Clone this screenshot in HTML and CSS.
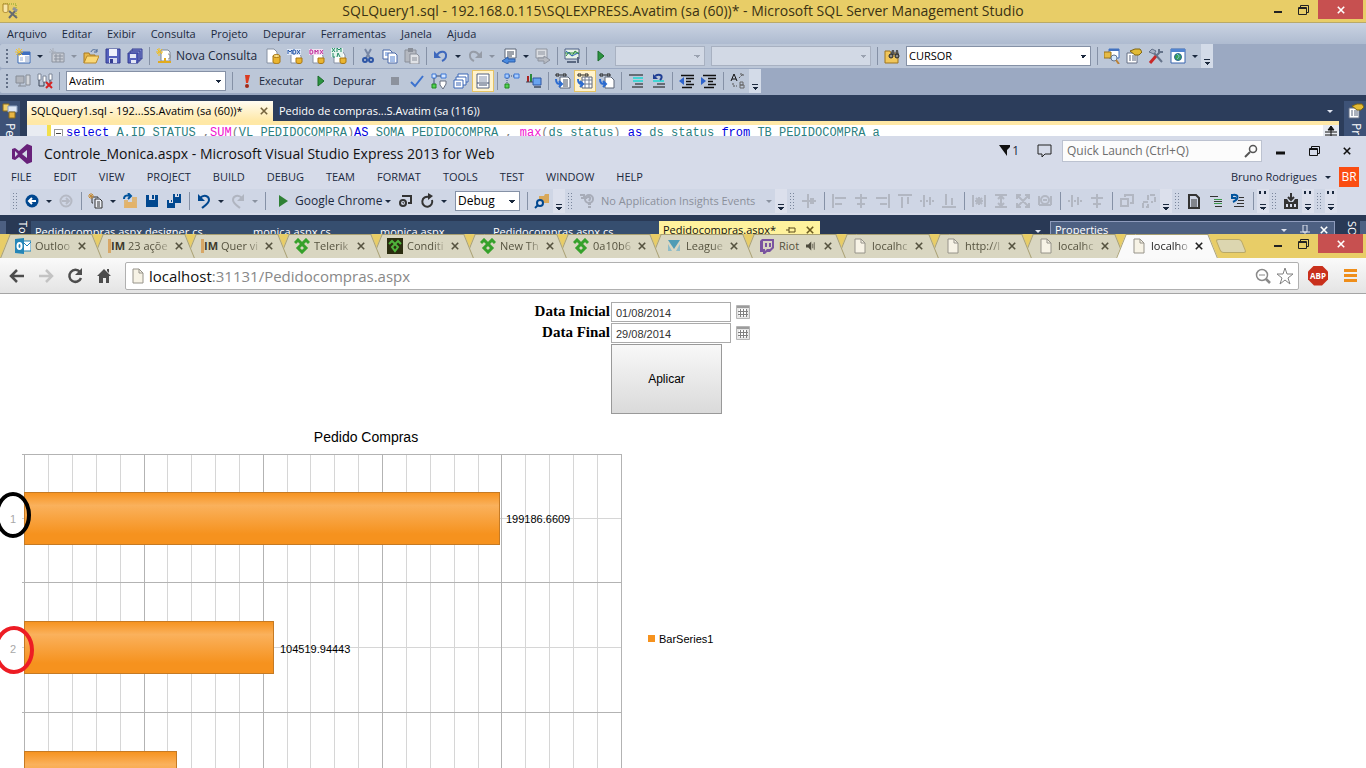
FILE: index.html
```
<!DOCTYPE html>
<html lang="pt-BR">

<head>
  <meta charset="UTF-8">
  <meta name="viewport" content="width=device-width, initial-scale=1.0">
  <title>Pedido Compras</title>
  <link rel="stylesheet" href="styles.css">
</head>

<body>

  <!-- icons -->
  <svg class="sprite" aria-hidden="true">
    <symbol id="new" viewBox="0 0 16 16"><path d="M3 4h12v11H3z" fill="#fff" stroke="#3a6ab4"/><path d="M3 4h12v3H3z" fill="#3f6fc0"/><path d="M5 9h3v4H5z" fill="#c9d5ea"/><path d="M10 9h4M10 11h4M10 13h4" stroke="#8ea3c8"/><path d="M4 0v8M0 4h8M1 1l6 6M7 1L1 7" stroke="#f2c230"/></symbol>
    <symbol id="newgray" viewBox="0 0 16 16"><path d="M3 5h12v9H3z" fill="#c8ccd4" stroke="#8c939f"/><path d="M5 8h9M5 11h9M7 6v8M11 6v8" stroke="#8c939f"/><path d="M4 0v7M0 4h7M1 1l5 5" stroke="#a9afba"/></symbol>
    <symbol id="open" viewBox="0 0 16 16"><path d="M1 15V5h5l1 2h5v2" fill="#e8b84a" stroke="#a87820"/><path d="M1 15l3-7h12l-3 7z" fill="#fad877" stroke="#b98a2a"/><path d="M8 4c1-3 4-3 6-1M14 1v3h-3" fill="none" stroke="#4a6896"/></symbol>
    <symbol id="save" viewBox="0 0 16 16"><path d="M1 1h14v14H1z" fill="#5561bd" stroke="#343c91"/><path d="M4 1h8v7H4z" fill="#eef0fb"/><path d="M4 10h8v5H4z" fill="#d6daf0"/><path d="M5 11h3v4H5z" fill="#343c91"/></symbol>
    <symbol id="saveall" viewBox="0 0 16 16"><path d="M5 1h10v10H5z" fill="#7d87cf" stroke="#343c91"/><path d="M3 3h10v10H3z" fill="#7d87cf" stroke="#343c91"/><path d="M1 5h10v10H1z" fill="#5561bd" stroke="#343c91"/><path d="M3 6h6v4H3zM4 12h5v3H4z" fill="#e3e6f5"/></symbol>
    <symbol id="query" viewBox="0 0 16 16"><path d="M5 2h7l2 2v9H5z" fill="#fff" stroke="#7f8896"/><path d="M12 6c3 0 3 5 0 5" fill="none" stroke="#8e8e8e"/><path d="M2 14h13M9 10v4" stroke="#e0aa20" stroke-width="2"/><path d="M3 0v8M0 4h7M1 1l5 5M6 1L1 6" stroke="#f0bd1c"/></symbol>
    <symbol id="dbdoc" viewBox="0 0 16 16"><path d="M2 1h7l3 3v11H2z" fill="#fff" stroke="#8791a3"/><path d="M8 8v6c0 2 7 2 7 0V8z" fill="#eab530" stroke="#a87612"/><ellipse cx="11.500" cy="8" rx="3.500" ry="1.500" fill="#ffe48b" stroke="#a87612"/></symbol>
    <symbol id="mdx" viewBox="0 0 16 16"><path d="M4 5h8l2 3v7H4z" fill="#fff" stroke="#8791a3"/><path d="M0 1h14v6H0z" fill="#dfe7f5"/><path d="M1 6V2l2 2 2-2v4M6 2h2l1 2-1 2H6zM10 2l3 4M13 2l-3 4" fill="none" stroke="#2456a8"/><path d="M9 10v4c0 2 6 2 6 0v-4z" fill="#eab530" stroke="#a87612"/></symbol>
    <symbol id="dmx" viewBox="0 0 16 16"><path d="M4 5h8l2 3v7H4z" fill="#fff" stroke="#8791a3"/><path d="M0 1h14v6H0z" fill="#f2e0f0"/><path d="M1 2h2l1 2-1 2H1zM6 6V2l1 2 2-2v4M11 2l3 4M14 2l-3 4" fill="none" stroke="#c02a9a"/><path d="M9 10v4c0 2 6 2 6 0v-4z" fill="#eab530" stroke="#a87612"/></symbol>
    <symbol id="xmla" viewBox="0 0 16 16"><path d="M3 4h9l2 3v8H3z" fill="#fff" stroke="#8791a3"/><path d="M0 0h12v9H0z" fill="#e6f4ee"/><path d="M1 0l3 4M4 0L1 4M6 4V0l2 2 2-2v4M2 5v4h2M6 9l1-4 2 4" fill="none" stroke="#1f8b64"/><path d="M9 10v4c0 2 6 2 6 0v-4z" fill="#eab530" stroke="#a87612"/></symbol>
    <symbol id="cut" viewBox="0 0 16 16"><path d="M5 1l5 9M11 1l-5 9" stroke="#7787a5" stroke-width="2"/><circle cx="5" cy="12" r="2" fill="none" stroke="#2d55a5" stroke-width="2"/><circle cx="11" cy="12" r="2" fill="none" stroke="#2d55a5" stroke-width="2"/></symbol>
    <symbol id="copy" viewBox="0 0 16 16"><path d="M1 2h7l2 2v7H1z" fill="#fff" stroke="#4a68a8"/><path d="M6 5h7l2 2v8H6z" fill="#fff" stroke="#4a68a8"/><path d="M8 9h5M8 11h5M8 13h5M3 5h3M3 7h3" stroke="#4f7fd0"/></symbol>
    <symbol id="paste" viewBox="0 0 16 16"><path d="M1 2h11v12H1z" fill="#b4b8c0" stroke="#8a8f99"/><path d="M4 0h5v4H4z" fill="#8a8f99"/><path d="M6 6h7l2 2v8H6z" fill="#e0e2e6" stroke="#8a8f99"/><path d="M8 10h5M8 12h5" stroke="#8a8f99"/></symbol>
    <symbol id="undo" viewBox="0 0 16 16"><path d="M4 7c3-5 10-4 9 1 0 2-2 4-4 5" fill="none" stroke="#3e68bd" stroke-width="2"/><path d="M1 3v7h7z" fill="#3e68bd"/></symbol>
    <symbol id="redo" viewBox="0 0 16 16"><path d="M12 7C9 2 2 3 3 8c0 2 2 4 4 5" fill="none" stroke="#969ca7" stroke-width="2"/><path d="M15 3v7H8z" fill="#969ca7"/></symbol>
    <symbol id="navback" viewBox="0 0 16 16"><path d="M4 1h11v9H4z" fill="#fff" stroke="#5c6678"/><path d="M6 4h7M6 6h7M6 8h5" stroke="#3d4656"/><path d="M7 9v2h7v3H7v2l-6-3z" fill="#4b8be0" stroke="#2a5ca8"/></symbol>
    <symbol id="navfwd" viewBox="0 0 16 16"><path d="M1 1h11v9H1z" fill="#dadde2" stroke="#8d939e"/><path d="M3 4h7M3 6h7" stroke="#8d939e"/><path d="M9 8v2H3v3h6v3l6-4z" fill="#b6bac2" stroke="#8d939e"/></symbol>
    <symbol id="monitor" viewBox="0 0 16 16"><path d="M1 1h14v10H1z" fill="#e8f3e8" stroke="#4d5f86"/><path d="M2 8l3-4 3 4 3-5 4 3M1 5h14" fill="none" stroke="#2c8c3c"/><path d="M2 3l6 5 6-3" fill="none" stroke="#3065c0"/><path d="M3 14h9M14 9v6" stroke="#5a6880" stroke-width="2"/></symbol>
    <symbol id="play" viewBox="0 0 16 16"><path d="M5 3l6 5-6 5z" fill="#2b9440" stroke="#1a6b2a"/></symbol>
    <symbol id="findfile" viewBox="0 0 16 16"><path d="M1 15V3h5l1 2h7v10z" fill="#f1c75b" stroke="#9d741e"/><path d="M8 2h2l1 5H6zM12 2h2l1 6h-4z" fill="#555"/><circle cx="7" cy="8" r="2" fill="#8b8b8b" stroke="#222"/><circle cx="13" cy="8" r="2" fill="#8b8b8b" stroke="#222"/></symbol>
    <symbol id="explorer" viewBox="0 0 16 16"><path d="M5 1h10v9H5z" fill="#fff" stroke="#4272c0"/><path d="M5 1h10v2H5z" fill="#4272c0"/><path d="M0 4h7v6H0z" fill="#e6bb45" stroke="#9a7218"/><circle cx="10" cy="10" r="3" fill="#d7ebff" stroke="#64748c"/><path d="M12 12l3 4" stroke="#bb8237" stroke-width="2"/></symbol>
    <symbol id="props" viewBox="0 0 16 16"><path d="M1 5h10v10H1z" fill="#fff" stroke="#667086"/><path d="M3 8h2M3 10h2M3 12h2M6 8h4M6 10h4M6 12h4" stroke="#56627a"/><path d="M4 3l5-2h5l2 3-3 3H9z" fill="#e3bb35" stroke="#816612"/></symbol>
    <symbol id="tools" viewBox="0 0 16 16"><path d="M14 14L6 5" stroke="#65738a" stroke-width="2"/><path d="M1 4l3-3 4 2-2 3z" fill="#a7b2c4" stroke="#65738a"/><path d="M2 15l6-7" stroke="#c92828" stroke-width="3"/><path d="M8 8l4-4M11 1v3h4" fill="none" stroke="#65738a" stroke-width="2"/></symbol>
    <symbol id="web" viewBox="0 0 16 16"><path d="M1 1h14v14H1z" fill="#fff" stroke="#3864ae"/><path d="M1 1h14v3H1z" fill="#5285d0"/><circle cx="8" cy="9" r="3.500" fill="#3aa055" stroke="#28659c"/><path d="M7 6c3 2 2 3 0 5" fill="none" stroke="#7fc9ee"/></symbol>

    <symbol id="conn" viewBox="0 0 16 16"><path d="M1 3h8v7H1z" fill="#b1b5bd" stroke="#868c96"/><path d="M3 13h8M11 2h4v10h-4zM5 10v3" fill="#d3d6db" stroke="#868c96"/></symbol>
    <symbol id="disc" viewBox="0 0 16 16"><path d="M1 1h3v6H1zM6 3h3v6H6zM12 1h3v6h-3z" fill="#fff" stroke="#7c8698"/><path d="M2 7v6h5V9M13 7v3" fill="none" stroke="#3c4658"/><path d="M9 9l6 6M15 9l-6 6" stroke="#d62222" stroke-width="2"/></symbol>
    <symbol id="bang" viewBox="0 0 16 16"><path d="M6 2h5l-2 8H7z" fill="#dc3a1f"/><circle cx="8" cy="13" r="2" fill="#a32a17"/></symbol>
    <symbol id="stop" viewBox="0 0 16 16"><path d="M4 4h8v8H4z" fill="#8c929d"/></symbol>
    <symbol id="check" viewBox="0 0 16 16"><path d="M2 9l4 4 8-10" fill="none" stroke="#3c72cf" stroke-width="2"/></symbol>
    <symbol id="plan" viewBox="0 0 16 16"><path d="M1 1h4v4H1zM10 1h5v4h-5z" fill="#d7e7ff" stroke="#3a77d6"/><path d="M1 11h4v4H1z" fill="#53d153" stroke="#218a21"/><path d="M5 3h5M3 5v6" stroke="#3a4f75"/><path d="M9 8h6v3l-3 5-3-4z" fill="#fff" stroke="#666f80"/></symbol>
    <symbol id="plan2" viewBox="0 0 16 16"><path d="M1 1h4v4H1zM10 1h5v4h-5z" fill="#a9cdff" stroke="#3a77d6"/><path d="M1 11h4v4H1z" fill="#53d153" stroke="#218a21"/><path d="M5 3h5M3 5v6" stroke="#3a4f75" stroke-dasharray="1 1"/></symbol>
    <symbol id="windows" viewBox="0 0 16 16"><path d="M5 1h10v8H5z" fill="#fff" stroke="#3a67b6"/><path d="M3 4h10v8H3z" fill="#fff" stroke="#3a67b6"/><path d="M1 7h9v8H1z" fill="#fff" stroke="#3a67b6"/><path d="M3 10h5M3 12h5" stroke="#3a67b6"/></symbol>
    <symbol id="page" viewBox="0 0 16 16"><path d="M2 1h12v14H2z" fill="#fff" stroke="#52617e"/><path d="M4 4h8M4 6h8M4 8h8" stroke="#8391ab"/><path d="M2 10h12M4 12h8" stroke="#3d4d6a"/></symbol>
    <symbol id="stats" viewBox="0 0 16 16"><path d="M1 3h2v6H1z" fill="#a22"/><path d="M4 1h2v8H4z" fill="#2b8a3a"/><path d="M0 9h8" stroke="#445"/><path d="M7 5h8v7H7z" fill="#69a4f0" stroke="#2f57a2"/><path d="M8 14h7" stroke="#5d6a80" stroke-width="2"/></symbol>
    <symbol id="restext" viewBox="0 0 16 16"><path d="M1 1h3v2H1zM6 1v2M8 1h3v2H8z" fill="none" stroke="#222"/><path d="M5 4h8l2 2v9H5z" fill="#fff" stroke="#5b6577"/><path d="M8 7h5M8 9h5M8 11h5M8 13h5" stroke="#454f60"/><path d="M1 6c0 5 2 5 5 5M4 8l3 3-3 3" fill="none" stroke="#2b6bd0" stroke-width="2"/></symbol>
    <symbol id="resgrid" viewBox="0 0 16 16"><path d="M1 1h3v2H1zM6 1v2M8 1h3v2H8z" fill="none" stroke="#222"/><path d="M5 4h10v11H5z" fill="#fff" stroke="#5b6577"/><path d="M5 7h10M5 11h10M8 4v11M12 4v11" stroke="#6d7a92"/><path d="M1 6c0 5 2 5 4 5M3 8l3 3-3 3" fill="none" stroke="#2b6bd0" stroke-width="2"/></symbol>
    <symbol id="resfile" viewBox="0 0 16 16"><path d="M1 1h3v2H1zM6 1v2M8 1h3v2H8z" fill="none" stroke="#222"/><path d="M6 4h6l3 3v8H6z" fill="#fff" stroke="#5b6577"/><path d="M1 6c0 5 2 5 5 5M4 8l3 3-3 3" fill="none" stroke="#2b6bd0" stroke-width="2"/></symbol>
    <symbol id="comment" viewBox="0 0 16 16"><path d="M1 2h14M4 14h11M7 11h8" stroke="#111"/><path d="M5 5h10M5 8h10" stroke="#43d3d3" stroke-width="2"/></symbol>
    <symbol id="uncomment" viewBox="0 0 16 16"><path d="M3 14h12M7 11h8" stroke="#111" stroke-width="1"/><path d="M3 8h11" stroke="#43d3d3" stroke-width="2"/><path d="M5 3c5-3 9 0 5 4" fill="none" stroke="#203f94" stroke-width="2"/><path d="M3 1v5h5z" fill="#203f94"/></symbol>
    <symbol id="outdent" viewBox="0 0 16 16"><path d="M2 2.500h13M7 5.500h8M7 8.500h5M7 11.500h8M3 14.500h10" stroke="#111" stroke-width="1.500"/><path d="M5 4v8L0 8z" fill="#2e63cc"/></symbol>
    <symbol id="indent" viewBox="0 0 16 16"><path d="M2 2.500h13M7 5.500h8M7 8.500h5M7 11.500h8M3 14.500h10" stroke="#111" stroke-width="1.500"/><path d="M0 4v8l5-4z" fill="#2e63cc"/></symbol>
    <symbol id="ab" viewBox="0 0 16 16"><path d="M1 8l3-7 3 7M2 6h4" fill="none" stroke="#111"/><path d="M10 9h3v3h-3zM10 12h4v3h-4z" fill="none" stroke="#666"/><path d="M9 5l4-4M10 1h3v3M3 10v3h4" fill="none" stroke="#555" stroke-dasharray="2 1"/></symbol>
    <symbol id="servers" viewBox="0 0 16 16"><path d="M1 1h6v7H1z" fill="#f0cf6a" stroke="#8a6a1c"/><path d="M6 3h9v6H6z" fill="#dce6f5" stroke="#8aa0c2"/><path d="M7 9h6v6H7z" fill="#e8b644" stroke="#8a6a1c"/></symbol>
    <symbol id="ssms" viewBox="0 0 16 16"><path d="M1 1h13v13" fill="none" stroke="#83a526" stroke-dasharray="1 1"/><path d="M1 1v7c0 2 5 2 5 0V1z" fill="#f8e6a8" stroke="#a98428"/><path d="M7 8l8 7M14 7l-7 8" stroke="#676b70" stroke-width="2"/><path d="M11 5l4 3" stroke="#8f9398" stroke-width="3"/></symbol>

    <symbol id="vs" viewBox="0 0 20 20"><path d="M15 0l5 2v16l-5 2-8-7-4 3-3-1V5l3-1 4 3zM15 6l-5 4 5 4zM3 7v6l3-3z" fill="#68217a" fill-rule="evenodd"/></symbol>
    <symbol id="vback" viewBox="0 0 16 16"><circle cx="8" cy="8" r="6.500" fill="#00478f"/><path d="M12 8H5M8 5L5 8l3 3" fill="none" stroke="#fff" stroke-width="2"/></symbol>
    <symbol id="vfwd" viewBox="0 0 16 16"><circle cx="8" cy="8" r="5.500" fill="none" stroke="#b5b9c4" stroke-width="2"/><path d="M4 8h7M8 5l3 3-3 3" fill="none" stroke="#b5b9c4" stroke-width="2"/></symbol>
    <symbol id="vnew" viewBox="0 0 16 16"><path d="M5 10H4V4h6v1" fill="none" stroke="#333"/><path d="M7 6h5l2 2v7H7z" fill="#eceff6" stroke="#333"/><path d="M9 9h3M9 11h3M9 13h3" stroke="#333"/><path d="M3 0v6M0 3h6M1 1l4 4M5 1L1 5" stroke="#c48a35"/></symbol>
    <symbol id="vopen" viewBox="0 0 16 16"><path d="M2 7h4v8H2zM10 4h5v11h-5z" fill="#dcb67a"/><path d="M2 15l2-6h9l2 6z" fill="#e3b36a"/><path d="M2 6c0-4 4-4 6-3M6 0l3 3-3 3" fill="none" stroke="#00539c" stroke-width="2"/></symbol>
    <symbol id="vsave" viewBox="0 0 16 16"><path d="M2 2h12v12H2z" fill="#00478f"/><path d="M5 2h6v5H5z" fill="#d6dbe9"/><path d="M8 2h2v4H8z" fill="#00478f"/></symbol>
    <symbol id="vsaveall" viewBox="0 0 16 16"><path d="M7 1h8v9H7zM1 7h8v8H1z" fill="#00478f"/><path d="M9 1h4v3H9zM3 7h4v3H3z" fill="#d6dbe9"/><path d="M5 7h1v2H5zM11 1h1v2h-1z" fill="#00478f"/></symbol>
    <symbol id="vundo" viewBox="0 0 16 16"><path d="M4 5c4-4 9-2 9 2 0 3-3 5-7 8" fill="none" stroke="#00478f" stroke-width="2"/><path d="M2 1v7h7z" fill="#00478f"/></symbol>
    <symbol id="vredo" viewBox="0 0 16 16"><path d="M12 5C8 1 3 3 3 7c0 3 3 5 7 8" fill="none" stroke="#b0b5c0" stroke-width="2"/><path d="M14 1v7H7z" fill="#b0b5c0"/></symbol>
    <symbol id="vplay" viewBox="0 0 16 16"><path d="M4 2l9 6-9 6z" fill="#2f8135"/></symbol>
    <symbol id="vlink" viewBox="0 0 16 16"><path d="M5 3h9v7h-3" fill="none" stroke="#333" stroke-width="2"/><circle cx="6" cy="10" r="3" fill="none" stroke="#333" stroke-width="2"/><path d="M6 9v1h1" stroke="#333" fill="none"/></symbol>
    <symbol id="vrefresh" viewBox="0 0 16 16"><path d="M10 4a5 5 0 1 0 3 3" fill="none" stroke="#333" stroke-width="2"/><path d="M9 0v7l5-4z" fill="#333"/></symbol>
    <symbol id="vfind" viewBox="0 0 16 16"><path d="M5 3h5l1-2h4v9H5z" fill="#d8a85a"/><circle cx="6" cy="10" r="3" fill="#d6dbe9" stroke="#00478f" stroke-width="2"/><path d="M4 12l-3 3" stroke="#00478f" stroke-width="2"/></symbol>
    <symbol id="vinsight" viewBox="0 0 16 16"><path d="M1 2h4v3h3M2 5h3" fill="none" stroke="#a7acb8" stroke-width="2"/><circle cx="10" cy="6" r="4" fill="none" stroke="#a7acb8" stroke-width="2"/><path d="M8 5c1-2 4-1 3 1l-1 2M9 11h3M9 14h3" fill="none" stroke="#a7acb8" stroke-width="2"/></symbol>
    <symbol id="a0" viewBox="0 0 16 16"><path d="M1 8h14M7 1v14" fill="none" stroke="#b2b7c2" stroke-width="2"/><path d="M9 5h4v6H9z" fill="#b2b7c2"/></symbol>
    <symbol id="a1" viewBox="0 0 16 16"><path d="M2 1v14M4 5h11M4 11h7" stroke="#b2b7c2" stroke-width="2"/></symbol>
    <symbol id="a2" viewBox="0 0 16 16"><path d="M8 1v3M8 6v4M8 12v3M2 5h12M4 11h8" stroke="#b2b7c2" stroke-width="2"/></symbol>
    <symbol id="a3" viewBox="0 0 16 16"><path d="M14 1v14M1 5h11M5 11h7" stroke="#b2b7c2" stroke-width="2"/></symbol>
    <symbol id="a4" viewBox="0 0 16 16"><path d="M1 2h14M5 4v11M11 4v7" stroke="#b2b7c2" stroke-width="2"/></symbol>
    <symbol id="a5" viewBox="0 0 16 16"><path d="M1 8h2M7 8h2M13 8h2M5 2v12M11 4v8" stroke="#b2b7c2" stroke-width="2"/></symbol>
    <symbol id="a6" viewBox="0 0 16 16"><path d="M1 14h14M5 1v11M11 5v7" stroke="#b2b7c2" stroke-width="2"/></symbol>
    <symbol id="a7" viewBox="0 0 16 16"><path d="M2 2v12M14 2v12M4 8h8M8 4v8M5 5l6 6M11 5l-6 6" stroke="#b2b7c2" stroke-width="2"/></symbol>
    <symbol id="a8" viewBox="0 0 16 16"><path d="M2 2h12M2 14h12M8 3v10M5 6l3-3 3 3M5 10l3 3 3-3" fill="none" stroke="#b2b7c2" stroke-width="2"/></symbol>
    <symbol id="a9" viewBox="0 0 16 16"><path d="M2 6V2h4M10 2h4v4M14 10v4h-4M6 14H2v-4M2 2l12 12M14 2L2 14" fill="none" stroke="#b2b7c2" stroke-width="2"/></symbol>
    <symbol id="a10" viewBox="0 0 16 16"><path d="M2 3v9M14 3v9M2 12h12" fill="none" stroke="#b2b7c2" stroke-width="2"/><circle cx="8" cy="7" r="4" fill="none" stroke="#b2b7c2" stroke-width="2"/><path d="M6 7h4" stroke="#b2b7c2" stroke-width="2"/></symbol>
    <symbol id="a11" viewBox="0 0 16 16"><path d="M6 4V2h8v8h-3M2 6h7v7H2z" fill="none" stroke="#b2b7c2" stroke-width="2"/></symbol>
    <symbol id="a12" viewBox="0 0 16 16"><path d="M7 7V2h7v7h-4M2 9h5v5H2z" fill="none" stroke="#b2b7c2" stroke-width="2" stroke-dasharray="5 2"/></symbol>
    <symbol id="vdoc" viewBox="0 0 16 16"><path d="M3 2h7l3 3v10H3z" fill="none" stroke="#333" stroke-width="2"/><path d="M5 7h6M5 9h6M5 11h6M5 13h6" stroke="#333"/></symbol>
    <symbol id="vlines" viewBox="0 0 16 16"><path d="M2 3.500h8M7 13.500h7" stroke="#333"/><path d="M6 6.500h8M6 10.500h8" stroke="#3c9a4c"/><path d="M6 8.500h8" stroke="#333"/></symbol>
    <symbol id="vlines2" viewBox="0 0 16 16"><path d="M9 4.500h5M8 7.500h6M7 10.500h7M4 13.500h10" stroke="#333"/><path d="M3 2c6-1 6 4 0 7M2 1v4h4" fill="none" stroke="#00539c" stroke-width="2"/></symbol>
    <symbol id="vpublish" viewBox="0 0 16 16"><path d="M8 0v6M5 4l3 3 3-3" fill="none" stroke="#333" stroke-width="2"/><path d="M1 6h3l2 3h4l2-3h3v10H1z" fill="#333"/><path d="M3 11h2v3H3zM7 11h2v3H7zM11 11h2v3h-2z" fill="#d6dbe9"/></symbol>

    <symbol id="outlook" viewBox="0 0 16 16"><path d="M8 3h8v10H8z" fill="#fff" stroke="#1e83b7"/><path d="M9 5l3 3 4-4" fill="none" stroke="#1e83b7"/><path d="M0 1l9-1v16l-9-1z" fill="#2586b8"/><ellipse cx="4.500" cy="8" rx="2" ry="3" fill="none" stroke="#fff" stroke-width="2"/></symbol>
    <symbol id="telerik" viewBox="0 0 16 16"><path d="M1 5l3-3 8 8-4 4-4-4 8-8 3 3" fill="none" stroke="#36a12b" stroke-width="3"/></symbol>
    <symbol id="telerikdark" viewBox="0 0 16 16"><path d="M0 0h16v16H0z" fill="#2b2d10"/><path d="M2 6l3-3 6 6-3 4-3-4 6-6 3 3" fill="none" stroke="#4fb33c" stroke-width="2"/></symbol>
    <symbol id="league" viewBox="0 0 16 16"><path d="M2 2h12l-6 9z" fill="#4f9cb5"/><path d="M2 6v7h4zM14 6v7h-4z" fill="#8fbcc8"/></symbol>
    <symbol id="twitch" viewBox="0 0 16 16"><path d="M1 3l2-2h12v9l-4 4H8l-2 2H4v-2H1z" fill="#7a54a0"/><path d="M4 3h9v6l-2 2H8l-2 2v-2H4z" fill="#d8d5c2"/><path d="M7 5v4M11 5v4" stroke="#7a54a0" stroke-width="2"/></symbol>
    <symbol id="sound" viewBox="0 0 16 16"><path d="M2 6h3l4-4v12l-4-4H2z" fill="#4d4a3c"/><path d="M11 5v6M13 3v10" stroke="#4d4a3c"/></symbol>
    <symbol id="file" viewBox="0 0 16 16"><path d="M3 1h6l4 4v10H3z" fill="#f7f3e6" stroke="#96938a"/><path d="M9 1v4h4" fill="none" stroke="#96938a"/></symbol>
    <symbol id="x" viewBox="0 0 10 10"><path d="M1 1l8 8M9 1L1 9" stroke="currentColor" stroke-width="2"/></symbol>
    <symbol id="min" viewBox="0 0 16 16"><path d="M5 10h8" stroke="currentColor" stroke-width="2"/></symbol>
    <symbol id="max" viewBox="0 0 16 16"><path d="M3.500 5.500h8v7h-8zM5.500 5V3.500h8v7H12M3 6.500h9" fill="none" stroke="currentColor"/></symbol>
    <symbol id="cback" viewBox="0 0 16 16"><path d="M15 8H2M8 2L2 8l6 6" fill="none" stroke="currentColor" stroke-width="2.500"/></symbol>
    <symbol id="cfwd" viewBox="0 0 16 16"><path d="M1 8h13M8 2l6 6-6 6" fill="none" stroke="currentColor" stroke-width="2.500"/></symbol>
    <symbol id="creload" viewBox="0 0 16 16"><path d="M13 4a6 6 0 1 0 1 6" fill="none" stroke="currentColor" stroke-width="2.500"/><path d="M15 0v7H8z" fill="currentColor"/></symbol>
    <symbol id="chome" viewBox="0 0 16 16"><path d="M8 1l7 7h-2v7h-3v-5H7v5H3V8H1zM11 1h2v4l-2-2z" fill="currentColor"/></symbol>
    <symbol id="cal" viewBox="0 0 14 14"><path d="M.5.500h13v13H.5z" fill="#e6e6e6" stroke="#b5b5b5"/><path d="M1 1h12v2H1z" fill="#9c9c9c"/><path d="M3 4h8v7H3z" fill="#fff"/><path d="M2 6.500h10M2 9.500h10M4.500 4v8M7.500 4v8M10.500 4v8" stroke="#808080"/></symbol>
  </svg>

  <!-- SQL Server Management Studio -->
  <section class="window ssms">
    <header class="titlebar">
      <svg class="ico"><use href="#ssms"/></svg>
      <h1>SQLQuery1.sql - 192.168.0.115\SQLEXPRESS.Avatim (sa (60))* - Microsoft SQL Server Management Studio</h1>
      <div class="winbuttons">
        <button aria-label="Minimizar"><svg class="ico"><use href="#min"/></svg></button>
        <button aria-label="Restaurar"><svg class="ico"><use href="#max"/></svg></button>
        <button class="close" aria-label="Fechar"><svg class="x"><use href="#x"/></svg></button>
      </div>
    </header>

    <nav class="menu">
      <a href="#">Arquivo</a>
      <a href="#">Editar</a>
      <a href="#">Exibir</a>
      <a href="#">Consulta</a>
      <a href="#">Projeto</a>
      <a href="#">Depurar</a>
      <a href="#">Ferramentas</a>
      <a href="#">Janela</a>
      <a href="#">Ajuda</a>
    </nav>

    <div class="bars">
      <div class="bar">
        <i class="grip"></i>
        <button class="b" aria-label="Novo projeto"><svg class="ico"><use href="#new"/></svg></button><i class="arrow"></i>
        <button class="b" aria-label="Adicionar item"><svg class="ico"><use href="#newgray"/></svg></button><i class="arrow off"></i>
        <button class="b" aria-label="Abrir"><svg class="ico"><use href="#open"/></svg></button>
        <button class="b" aria-label="Salvar"><svg class="ico"><use href="#save"/></svg></button>
        <button class="b" aria-label="Salvar tudo"><svg class="ico"><use href="#saveall"/></svg></button>
        <i class="sep"></i>
        <button class="b text nova"><svg class="ico"><use href="#query"/></svg>Nova Consulta</button>
        <button class="b" aria-label="Consulta do mecanismo"><svg class="ico"><use href="#dbdoc"/></svg></button>
        <button class="b" aria-label="Consulta MDX"><svg class="ico"><use href="#mdx"/></svg></button>
        <button class="b" aria-label="Consulta DMX"><svg class="ico"><use href="#dmx"/></svg></button>
        <button class="b" aria-label="Consulta XMLA"><svg class="ico"><use href="#xmla"/></svg></button>
        <i class="sep"></i>
        <button class="b" aria-label="Recortar"><svg class="ico"><use href="#cut"/></svg></button>
        <button class="b" aria-label="Copiar"><svg class="ico"><use href="#copy"/></svg></button>
        <button class="b" aria-label="Colar"><svg class="ico"><use href="#paste"/></svg></button>
        <i class="sep"></i>
        <button class="b" aria-label="Desfazer"><svg class="ico"><use href="#undo"/></svg></button><i class="arrow"></i>
        <button class="b" aria-label="Refazer"><svg class="ico"><use href="#redo"/></svg></button><i class="arrow off"></i>
        <button class="b" aria-label="Navegar para trás"><svg class="ico"><use href="#navback"/></svg></button><i class="arrow"></i>
        <button class="b" aria-label="Navegar para frente"><svg class="ico"><use href="#navfwd"/></svg></button>
        <i class="sep"></i>
        <button class="b" aria-label="Monitor de atividade"><svg class="ico"><use href="#monitor"/></svg></button>
        <i class="sep"></i>
        <button class="b" aria-label="Iniciar"><svg class="ico"><use href="#play"/></svg></button>
        <select class="combo small" aria-label="Configuração" disabled><option></option></select>
        <select class="combo" aria-label="Plataforma" disabled><option></option></select>
        <i class="sep"></i>
        <button class="b" aria-label="Localizar em arquivos"><svg class="ico"><use href="#findfile"/></svg></button>
        <select class="combo wide" aria-label="Localizar"><option>CURSOR</option></select>
        <i class="sep"></i>
        <button class="b" aria-label="Explorador"><svg class="ico"><use href="#explorer"/></svg></button>
        <button class="b" aria-label="Propriedades"><svg class="ico"><use href="#props"/></svg></button>
        <button class="b" aria-label="Ferramentas"><svg class="ico"><use href="#tools"/></svg></button>
        <button class="b" aria-label="Navegador"><svg class="ico"><use href="#web"/></svg></button><i class="arrow"></i>
        <i class="more"></i>
      </div>
      <div class="bar">
        <i class="grip"></i>
        <button class="b" aria-label="Conectar"><svg class="ico"><use href="#conn"/></svg></button>
        <button class="b" aria-label="Desconectar"><svg class="ico"><use href="#disc"/></svg></button>
        <i class="sep"></i>
        <select class="combo" aria-label="Banco de dados"><option>Avatim</option></select>
        <i class="sep"></i>
        <button class="b text run"><svg class="ico"><use href="#bang"/></svg>Executar</button>
        <button class="b text run"><svg class="ico"><use href="#play"/></svg>Depurar</button>
        <button class="b" aria-label="Parar"><svg class="ico"><use href="#stop"/></svg></button>
        <button class="b" aria-label="Analisar"><svg class="ico"><use href="#check"/></svg></button>
        <button class="b" aria-label="Plano estimado"><svg class="ico"><use href="#plan"/></svg></button>
        <button class="b" aria-label="Opções de consulta"><svg class="ico"><use href="#windows"/></svg></button>
        <button class="b on" aria-label="IntelliSense"><svg class="ico"><use href="#page"/></svg></button>
        <i class="sep"></i>
        <button class="b" aria-label="Plano real"><svg class="ico"><use href="#plan2"/></svg></button>
        <button class="b" aria-label="Estatísticas"><svg class="ico"><use href="#stats"/></svg></button>
        <i class="sep"></i>
        <button class="b" aria-label="Resultados em texto"><svg class="ico"><use href="#restext"/></svg></button>
        <button class="b on" aria-label="Resultados em grade"><svg class="ico"><use href="#resgrid"/></svg></button>
        <button class="b" aria-label="Resultados em arquivo"><svg class="ico"><use href="#resfile"/></svg></button>
        <i class="sep"></i>
        <button class="b" aria-label="Comentar"><svg class="ico"><use href="#comment"/></svg></button>
        <button class="b" aria-label="Remover comentário"><svg class="ico"><use href="#uncomment"/></svg></button>
        <i class="sep"></i>
        <button class="b" aria-label="Diminuir recuo"><svg class="ico"><use href="#outdent"/></svg></button>
        <button class="b" aria-label="Aumentar recuo"><svg class="ico"><use href="#indent"/></svg></button>
        <i class="sep"></i>
        <button class="b" aria-label="Parâmetros"><svg class="ico"><use href="#ab"/></svg></button>
        <i class="more"></i>
      </div>
    </div>

    <div class="work">
      <aside class="side"><svg class="ico"><use href="#servers"/></svg><span>Pe</span></aside>
      <div class="docs">
        <div class="doctabs">
          <a class="doctab active" href="#">SQLQuery1.sql - 192...SS.Avatim (sa (60))* <svg class="x"><use href="#x"/></svg></a>
          <a class="doctab" href="#">Pedido de compras...S.Avatim (sa (116))</a>
          <i class="arrow light"></i>
        </div>
        <div class="editor">
          <i class="changed"></i><i class="fold"></i>
          <code><b>select</b> A.ID_STATUS <s>,</s><u>SUM</u><s>(</s>VL_PEDIDOCOMPRA<s>)</s><b>AS</b> SOMA_PEDIDOCOMPRA <s>,</s> <u>max</u><s>(</s>ds_status<s>)</s> <b>as</b> ds_status <b>from</b> TB_PEDIDOCOMPRA a</code>
          <svg class="split" viewBox="0 0 16 16"><path d="M0 0h16v16H0z" fill="#e8ebf1"/><path d="M8 1L5 5h6zM2 7h12M2 10h12M8 4v12" fill="#111" stroke="#111"/></svg>
        </div>
      </div>
      <aside class="side right"><svg class="ico"><use href="#props"/></svg><span>Pr</span></aside>
    </div>
  </section>

  <!-- Visual Studio -->
  <section class="window vs">
    <header class="vshead">
      <svg class="logo"><use href="#vs"/></svg>
      <h2>Controle_Monica.aspx - Microsoft Visual Studio Express 2013 for Web</h2>
      <svg class="flag" viewBox="0 0 12 14"><path d="M0 1h11v2L8 6v6L0 1z" fill="#111"/></svg><span class="count">1</span>
      <svg class="bubble" viewBox="0 0 16 16"><path d="M1 2h13v9H8l-3 3v-3H1z" fill="none" stroke="#222"/></svg>
      <div class="quick">
        <input type="text" placeholder="Quick Launch (Ctrl+Q)" aria-label="Quick Launch">
        <svg class="ico" viewBox="0 0 16 16"><circle cx="10" cy="6" r="3.500" fill="none" stroke="#555" stroke-width="1.500"/><path d="M7 9l-5 5" stroke="#555" stroke-width="2"/></svg>
      </div>
      <div class="vsbuttons">
        <button aria-label="Minimize"><svg class="ico" viewBox="0 0 16 16"><path d="M3 10h9" stroke="#111" stroke-width="3"/></svg></button>
        <button aria-label="Restore"><svg class="ico"><use href="#max"/></svg></button>
        <button aria-label="Close"><svg class="x"><use href="#x"/></svg></button>
      </div>
    </header>
    <div class="vsmenu">
      <nav>
        <a href="#">FILE</a>
        <a href="#">EDIT</a>
        <a href="#">VIEW</a>
        <a href="#">PROJECT</a>
        <a href="#">BUILD</a>
        <a href="#">DEBUG</a>
        <a href="#">TEAM</a>
        <a href="#">FORMAT</a>
        <a href="#">TOOLS</a>
        <a href="#">TEST</a>
        <a href="#">WINDOW</a>
        <a href="#">HELP</a>
      </nav>
      <span class="user">Bruno Rodrigues</span><i class="arrow"></i><span class="avatar">BR</span>
    </div>

    <div class="bar vsbar">
      <i class="grip"></i>
      <button class="b" aria-label="Back"><svg class="ico"><use href="#vback"/></svg></button><i class="arrow"></i>
      <button class="b" aria-label="Forward"><svg class="ico"><use href="#vfwd"/></svg></button>
      <i class="sep"></i>
      <button class="b" aria-label="New"><svg class="ico"><use href="#vnew"/></svg></button><i class="arrow"></i>
      <button class="b" aria-label="Open"><svg class="ico"><use href="#vopen"/></svg></button>
      <button class="b" aria-label="Save"><svg class="ico"><use href="#vsave"/></svg></button>
      <button class="b" aria-label="Save all"><svg class="ico"><use href="#vsaveall"/></svg></button>
      <i class="sep"></i>
      <button class="b" aria-label="Undo"><svg class="ico"><use href="#vundo"/></svg></button><i class="arrow"></i>
      <button class="b" aria-label="Redo"><svg class="ico"><use href="#vredo"/></svg></button><i class="arrow off"></i>
      <i class="sep"></i>
      <button class="b text chromebtn"><svg class="ico"><use href="#vplay"/></svg>Google Chrome</button><i class="arrow"></i>
      <button class="b" aria-label="Browser link"><svg class="ico"><use href="#vlink"/></svg></button>
      <button class="b" aria-label="Refresh"><svg class="ico"><use href="#vrefresh"/></svg></button><i class="arrow"></i>
      <select class="combo debug" aria-label="Configuration"><option>Debug</option></select>
      <i class="sep"></i>
      <button class="b" aria-label="Find in files"><svg class="ico"><use href="#vfind"/></svg></button>
      <i class="more"></i>
      <i class="grip"></i>
      <button class="b text insights" disabled><svg class="ico"><use href="#vinsight"/></svg>No Application Insights Events</button><i class="arrow off"></i>
      <i class="more"></i>
      <i class="grip"></i>
      <button class="b" aria-label="Grid"><svg class="ico"><use href="#a0"/></svg></button>
      <i class="sep"></i>
      <button class="b" aria-label="Align lefts"><svg class="ico"><use href="#a1"/></svg></button>
      <button class="b" aria-label="Align centers"><svg class="ico"><use href="#a2"/></svg></button>
      <button class="b" aria-label="Align rights"><svg class="ico"><use href="#a3"/></svg></button>
      <button class="b" aria-label="Align tops"><svg class="ico"><use href="#a4"/></svg></button>
      <button class="b" aria-label="Align middles"><svg class="ico"><use href="#a5"/></svg></button>
      <button class="b" aria-label="Align bottoms"><svg class="ico"><use href="#a6"/></svg></button>
      <i class="sep"></i>
      <button class="b" aria-label="Same width"><svg class="ico"><use href="#a7"/></svg></button>
      <button class="b" aria-label="Same height"><svg class="ico"><use href="#a8"/></svg></button>
      <button class="b" aria-label="Same size"><svg class="ico"><use href="#a9"/></svg></button>
      <button class="b" aria-label="Size to grid"><svg class="ico"><use href="#a10"/></svg></button>
      <i class="sep"></i>
      <button class="b" aria-label="Center horizontally"><svg class="ico"><use href="#a5"/></svg></button>
      <button class="b" aria-label="Center vertically"><svg class="ico"><use href="#a2"/></svg></button>
      <i class="sep"></i>
      <button class="b" aria-label="Bring to front"><svg class="ico"><use href="#a11"/></svg></button>
      <button class="b" aria-label="Send to back"><svg class="ico"><use href="#a12"/></svg></button>
      <i class="more"></i>
      <i class="grip"></i>
      <button class="b" aria-label="Document"><svg class="ico"><use href="#vdoc"/></svg></button>
      <button class="b" aria-label="Comment"><svg class="ico"><use href="#vlines"/></svg></button>
      <button class="b" aria-label="Uncomment"><svg class="ico"><use href="#vlines2"/></svg></button>
      <i class="sep"></i>
      <i class="more dots"></i>
      <i class="grip"></i>
      <button class="b" aria-label="Publish"><svg class="ico"><use href="#vpublish"/></svg></button>
      <i class="more dots"></i>
      <i class="grip"></i>
      <i class="more dots"></i>
    </div>

    <div class="vswork">
      <i class="stub"></i>
      <span class="vert">To</span>
      <div class="vstabs">
        <a class="t1" href="#">Pedidocompras.aspx.designer.cs</a>
        <a class="t2" href="#">monica.aspx.cs</a>
        <a class="t3" href="#">monica.aspx</a>
        <a class="t4" href="#">Pedidocompras.aspx.cs</a>
        <a class="active" href="#">Pedidocompras.aspx* <svg class="pin" viewBox="0 0 10 10"><path d="M0 5h3M3 2v6M3 3h6v4H3" fill="none" stroke="#5c4d1c"/></svg><svg class="x"><use href="#x"/></svg></a>
      </div>
      <i class="arrow light"></i>
      <div class="panel">Properties<i class="arrow light"></i><svg class="pin" viewBox="0 0 10 10"><path d="M3 0h4v7H3zM0 7h10M5 7v3" fill="none" stroke="#dfe4ef"/></svg><svg class="x"><use href="#x"/></svg></div>
      <span class="vert">SO</span>
      <i class="stub"></i>
    </div>
  </section>

  <!-- Chrome -->
  <section class="window chrome">
    <div class="tabstrip">
      <a class="tab" href="#"><svg class="ico"><use href="#outlook"/></svg><span>Outloo</span><svg class="x"><use href="#x"/></svg></a>
      <a class="tab" href="#"><em>IM</em><span>23 açõe</span><svg class="x"><use href="#x"/></svg></a>
      <a class="tab" href="#"><em>IM</em><span>Quer vi</span><svg class="x"><use href="#x"/></svg></a>
      <a class="tab" href="#"><svg class="ico"><use href="#telerik"/></svg><span>Telerik</span><svg class="x"><use href="#x"/></svg></a>
      <a class="tab" href="#"><svg class="ico"><use href="#telerikdark"/></svg><span>Conditi</span><svg class="x"><use href="#x"/></svg></a>
      <a class="tab" href="#"><svg class="ico"><use href="#telerik"/></svg><span>New Th</span><svg class="x"><use href="#x"/></svg></a>
      <a class="tab" href="#"><svg class="ico"><use href="#telerik"/></svg><span>0a10b6</span><svg class="x"><use href="#x"/></svg></a>
      <a class="tab" href="#"><svg class="ico"><use href="#league"/></svg><span>League</span><svg class="x"><use href="#x"/></svg></a>
      <a class="tab" href="#"><svg class="ico"><use href="#twitch"/></svg><span class="short">Riot</span><svg class="snd"><use href="#sound"/></svg><svg class="x"><use href="#x"/></svg></a>
      <a class="tab" href="#"><svg class="ico"><use href="#file"/></svg><span>localhc</span><svg class="x"><use href="#x"/></svg></a>
      <a class="tab" href="#"><svg class="ico"><use href="#file"/></svg><span>http://l</span><svg class="x"><use href="#x"/></svg></a>
      <a class="tab" href="#"><svg class="ico"><use href="#file"/></svg><span>localhc</span><svg class="x"><use href="#x"/></svg></a>
      <a class="tab current" href="#"><svg class="ico"><use href="#file"/></svg><span>localho</span><svg class="x"><use href="#x"/></svg></a>
      <button class="newtab" aria-label="Nova guia"></button>
      <div class="winbuttons">
        <button aria-label="Minimizar"><svg class="ico"><use href="#min"/></svg></button>
        <button aria-label="Restaurar"><svg class="ico"><use href="#max"/></svg></button>
        <button class="close" aria-label="Fechar"><svg class="x"><use href="#x"/></svg></button>
      </div>
    </div>

    <div class="addressbar">
      <button aria-label="Voltar"><svg class="ico"><use href="#cback"/></svg></button>
      <button class="off" aria-label="Avançar"><svg class="ico"><use href="#cfwd"/></svg></button>
      <button aria-label="Recarregar"><svg class="ico"><use href="#creload"/></svg></button>
      <button aria-label="Página inicial"><svg class="ico"><use href="#chome"/></svg></button>
      <div class="omnibox">
        <svg class="ico"><use href="#file"/></svg>
        <div class="url" role="textbox" tabindex="0" aria-label="Endereço">localhost<span>:31131/Pedidocompras.aspx</span></div>
        <svg class="ico" viewBox="0 0 16 16"><circle cx="7" cy="7" r="5.500" fill="none" stroke="#8a8a8a" stroke-width="1.500"/><path d="M11 11l4 4" stroke="#8a8a8a" stroke-width="2.500"/><path d="M4 7h6" stroke="#8a8a8a"/></svg>
        <svg class="star" viewBox="0 0 18 18"><path d="M9 1l2 6h6l-5 4 2 6-5-4-5 4 2-6-5-4h6z" fill="#fff" stroke="#808080"/></svg>
      </div>
      <button class="abp" aria-label="Adblock Plus">ABP</button>
      <button class="hotdog" aria-label="Menu"><i></i><i></i><i></i></button>
    </div>

    <main class="page">
      <form class="filter">
        <label for="ini">Data Inicial</label>
        <div class="date"><input id="ini" type="text" value="01/08/2014"><button type="button" aria-label="Abrir calendário"><svg class="cal"><use href="#cal"/></svg></button></div>
        <label for="fim">Data Final</label>
        <div class="date"><input id="fim" type="text" value="29/08/2014"><button type="button" aria-label="Abrir calendário"><svg class="cal"><use href="#cal"/></svg></button></div>
        <button class="apply" type="button">Aplicar</button>
      </form>

      <svg class="chart" viewBox="0 0 740 480" role="img" aria-label="Pedido Compras">
        <defs>
          <linearGradient id="orange" x1="0" y1="0" x2="0" y2="1">
            <stop offset="0" stop-color="#f6921e"/>
            <stop offset=".25" stop-color="#fab15c"/>
            <stop offset=".8" stop-color="#f6921e"/>
            <stop offset="1" stop-color="#f6921e"/>
          </linearGradient>
        </defs>
        <text class="title" x="366" y="18" text-anchor="middle">Pedido Compras</text>
        <path class="minor" d="M48.500 30v450M72.500 30v450M96.500 30v450M120.500 30v450M167.500 30v450M191.500 30v450M215.500 30v450M239.500 30v450M287.500 30v450M310.500 30v450M334.500 30v450M358.500 30v450M406.500 30v450M430.500 30v450M454.500 30v450M478.500 30v450M525.500 30v450M549.500 30v450M573.500 30v450M597.500 30v450M22 94.500h599M22 223.500h599M22 353.500h599"/>
        <path class="major" d="M24.500 30v450M144.500 30v450M263.500 30v450M382.500 30v450M501.500 30v450M621.500 30v450M22 30.500h600M22 158.500h600M22 288.500h600M22 417.500h600"/>
        <g class="series">
          <rect x="24.500" y="68.500" width="475" height="52"/>
          <rect x="24.500" y="197.500" width="249" height="52"/>
          <rect x="24.500" y="327.500" width="152" height="52"/>
        </g>
        <text x="506" y="99">199186.6609</text>
        <text x="280" y="229">104519.94443</text>
        <ellipse cx="13" cy="91" rx="16" ry="21" fill="none" stroke="#000" stroke-width="4"/>
        <ellipse cx="14" cy="226" rx="18" ry="22" fill="none" stroke="#ed1c24" stroke-width="4"/>
        <text class="axis" x="10" y="99">1</text>
        <text class="axis" x="10" y="229">2</text>
        <rect x="648" y="211" width="7" height="7" fill="#f6921e"/>
        <text x="659" y="219">BarSeries1</text>
      </svg>
    </main>
  </section>

</body>

</html>
```
FILE: styles.css
```
* {
  box-sizing: border-box;
  margin: 0;
  padding: 0;
}

body {
  display: flex;
  flex-direction: column;
  height: 100vh;
  overflow: hidden;
  font-family: "Open Sans", "Noto Sans", sans-serif;
  font-size: 12px;
  line-height: 16px;
  color: #1b293e;
  background: #fff;
}

a {
  color: inherit;
  text-decoration: none;
}

button {
  border: 0;
  background: none;
  font: inherit;
  color: inherit;
}

svg {
  flex: none;
  display: block;
}

.sprite {
  width: 0;
  height: 0;
  position: absolute;
}

.ico {
  width: 16px;
  height: 16px;
}

.x {
  width: 8px;
  height: 8px;
}

.window {
  overflow: hidden;
  flex: none;
}

/* window buttons */
.winbuttons {
  display: flex;
  align-self: flex-start;
  height: 19px;
  margin-right: 3px;
  color: #222;
}

.winbuttons button {
  width: 26px;
  display: flex;
  align-items: center;
  justify-content: center;
}

.winbuttons .close {
  width: 45px;
  margin-left: 2px;
  background: #c75050;
  color: #fff;
}

/* SSMS ----------------------------------- */
.ssms {
  height: 136px;
  display: flex;
  flex-direction: column;
}

.titlebar {
  flex: none;
  display: flex;
  align-items: center;
  height: 23px;
  padding-left: 2px;
  background: #e8cd67;
  border-bottom: 1px solid #b9a968;
}

h1 {
  flex: 1;
  padding-left: 84px;
  text-align: center;
  font-size: 14px;
  font-weight: 400;
  color: #3a3214;
  white-space: nowrap;
}

.menu {
  flex: none;
  display: flex;
  align-items: center;
  gap: 15px;
  height: 21px;
  padding-left: 7px;
  background: linear-gradient(#cad3e2, #aebbd0);
}

.menu,
.vsmenu {
  font-size: 11px;
}

.bars {
  flex: none;
  height: 51px;
  background: #9ba9c2;
}

.bar {
  display: flex;
  align-items: center;
  width: max-content;
  height: 24px;
  margin-bottom: 1px;
  background: #bcc7d8;
  border-radius: 2px;
}

.grip {
  width: 2px;
  height: 14px;
  margin: 0 4px 0 6px;
  background: repeating-linear-gradient(#626f86 0 2px, transparent 2px 4px);
}

.b {
  width: 22px;
  height: 22px;
  display: flex;
  align-items: center;
  justify-content: center;
  white-space: nowrap;
}

.b.on {
  background: #fff3cd;
  border: 1px solid #e5c365;
}

.b.text {
  justify-content: flex-start;
  gap: 4px;
  padding-left: 3px;
}

.nova {
  width: 109px;
}

.b.run {
  width: 74px;
  font-size: 11px;
}

.arrow {
  flex: none;
  width: 6px;
  height: 3px;
  margin: 3px 3px 0;
  border: 3px solid transparent;
  border-top-color: #1b293e;
}

.arrow.off {
  border-top-color: #8a92a0;
}

.arrow.light {
  border-top-color: #dfe4ef;
}

.sep {
  width: 1px;
  height: 18px;
  margin: 0 3px;
  background: #8591a6;
}

.combo {
  appearance: none;
  width: 160px;
  height: 20px;
  margin: 0 3px;
  padding: 0 2px;
  border: 1px solid #8591a6;
  border-radius: 0;
  font: inherit;
  font-size: 11px;
  color: #000;
  background:
    linear-gradient(45deg, transparent 50%, #1b293e 50%) right 7px center / 3px 3px no-repeat,
    linear-gradient(-45deg, transparent 50%, #1b293e 50%) right 4px center / 3px 3px no-repeat,
    #fff;
  background:
    conic-gradient(from -45deg at 50% 100%, #1b293e 90deg, transparent 0) right 4px center / 6px 3px no-repeat,
    #fff;
}

.combo:disabled {
  opacity: 1;
  background:
    conic-gradient(from -45deg at 50% 100%, #9aa2b0 90deg, transparent 0) right 4px center / 6px 3px no-repeat,
    #d2d9e5;
  border-color: #a8b1c1;
}

.combo.small {
  width: 90px;
}

.combo.wide {
  width: 185px;
}

.more {
  align-self: stretch;
  width: 12px;
  background:
    linear-gradient(#1b293e, #1b293e) center 15px / 6px 1px no-repeat,
    conic-gradient(from -45deg at 50% 100%, #1b293e 90deg, transparent 0) center 18px / 6px 3px no-repeat;
  background-color: #d3dbe8;
}

.work {
  flex: 1;
  min-height: 0;
  display: flex;
  padding-top: 6px;
  background: #2c3d5b;
}

.side {
  width: 20px;
  margin-right: 7px;
  padding: 2px;
  background: #3d5277;
  color: #fff;
}

.side.right {
  width: 22px;
  margin: 0 0 0 5px;
  padding-left: 4px;
}

.side span {
  display: block;
  margin-top: 4px;
  writing-mode: vertical-rl;
}

.docs {
  flex: 1;
}

.doctabs {
  display: flex;
  align-items: center;
  height: 20px;
  font-size: 11px;
}

.doctab {
  padding: 0 6px;
  color: #fff;
}

.doctab.active {
  display: flex;
  align-items: center;
  justify-content: space-between;
  width: 246px;
  height: 20px;
  padding: 0 5px 0 4px;
  color: #000;
  background: linear-gradient(#fffcf2, #ffe8a6);
}

.doctab .x {
  color: #75633d;
}

.doctabs .arrow {
  margin-left: auto;
  margin-right: 6px;
}

.editor {
  display: flex;
  height: 30px;
  padding-left: 20px;
  border-top: 4px solid #ffe8a6;
  background: linear-gradient(90deg, #e9ecf2 20px, #fff 20px);
  font: 12px/16px "Liberation Mono", monospace;
  color: #2b8080;
  white-space: pre;
}

.changed {
  width: 4px;
  background: #f3e04c;
}

.fold {
  width: 9px;
  height: 9px;
  margin: 4px 3px;
  border: 1px solid #999;
  background: linear-gradient(#444, #444) center / 5px 1px no-repeat;
}

code {
  flex: 1;
  font: inherit;
}

code b {
  font-weight: 400;
  color: #0000e0;
}

code u {
  text-decoration: none;
  color: #f012d0;
}

code s {
  text-decoration: none;
  color: #808080;
}

.split {
  width: 16px;
  height: 16px;
}

/* Visual Studio ----------------------------------- */
.vs {
  height: 98px;
  background: #d6dbe9;
}

.vshead {
  display: flex;
  align-items: center;
  height: 29px;
  padding: 0 9px 0 12px;
}

.logo {
  width: 20px;
  height: 20px;
  margin: 6px 12px 0 0;
}

h2 {
  flex: 1;
  padding-top: 7px;
  font-size: 14px;
  font-weight: 400;
  color: #111;
}

.flag {
  width: 12px;
  height: 14px;
}

.count {
  margin: 0 18px 0 1px;
}

.bubble {
  width: 16px;
  height: 16px;
  margin-right: 9px;
}

.quick {
  display: flex;
  align-items: center;
  width: 200px;
  height: 22px;
  padding: 0 2px 0 4px;
  background: #fcfcfc;
  border: 1px solid #bcc2d0;
}

.quick input {
  flex: 1;
  width: 0;
  border: 0;
  background: none;
  font: inherit;
}

.quick input::placeholder {
  color: #6d6d6d;
}

.vsbuttons {
  display: flex;
  gap: 13px;
  margin-left: 9px;
  color: #111;
}

.vsbuttons button {
  width: 20px;
  display: flex;
  align-items: center;
  justify-content: center;
}

.vsmenu {
  display: flex;
  align-items: center;
  height: 24px;
  padding: 0 7px 0 11px;
}

.vsmenu nav {
  flex: 1;
  display: flex;
  gap: 22px;
}

.vsmenu .arrow {
  margin: 3px 8px 0;
}

.avatar {
  width: 20px;
  height: 20px;
  line-height: 20px;
  text-align: center;
  font-size: 12px;
  background: #fb4d12;
  color: #fff;
}

.vsbar {
  margin: 0 0 2px 10px;
  background: #cfd6e5;
}

.vsbar .grip {
  width: 5px;
  height: 18px;
  margin: 0 4px 0 2px;
  background: radial-gradient(#7a869c 1px, transparent 1px) 0 0 / 3px 3px;
}

.vsbar .sep {
  margin: 0 3px 0 4px;
}

.b.chromebtn {
  width: 113px;
  padding-left: 6px;
}

.b.insights {
  width: 187px;
  gap: 6px;
  font-size: 11px;
  color: #8b909b;
}

.combo.debug {
  width: 65px;
  margin: 0 3px 0 5px;
  font-size: 12px;
}

.vsbar .more {
  background-color: #dce0ec;
}

.vsbar .dots {
  background:
    linear-gradient(#1b293e, #1b293e) 2px 2px / 2px 3px no-repeat,
    linear-gradient(#1b293e, #1b293e) 7px 2px / 2px 3px no-repeat,
    linear-gradient(#1b293e, #1b293e) center 15px / 6px 1px no-repeat,
    conic-gradient(from -45deg at 50% 100%, #1b293e 90deg, transparent 0) center 18px / 6px 3px no-repeat;
  background-color: #dce0ec;
}

.vswork {
  display: flex;
  height: 24px;
  padding-top: 6px;
  background: #293955;
  color: #fff;
  font-size: 11px;
  line-height: 22px;
}

.stub {
  width: 6px;
  background: #4d6082;
}

.vert {
  width: 25px;
  padding-left: 3px;
  writing-mode: vertical-rl;
  line-height: 16px;
}

.vstabs {
  flex: 1;
  display: flex;
}

.vstabs a {
  padding-left: 4px;
  background: #364e6f;
}

.vstabs .t1 {
  width: 218px;
}

.vstabs .t2 {
  width: 127px;
}

.vstabs .t3 {
  width: 113px;
}

.vstabs .t4 {
  width: 170px;
}

.vstabs .active {
  display: flex;
  align-items: center;
  gap: 10px;
  width: 161px;
  background: #fff29d;
  color: #111;
}

.vstabs .x {
  color: #6b5a20;
}

.pin {
  width: 10px;
  height: 10px;
}

.vswork > .arrow {
  margin: 9px 9px 0 0;
}

.panel {
  display: flex;
  align-items: center;
  gap: 10px;
  width: 285px;
  padding: 0 6px 0 4px;
  background: #4d6082;
  border: 1px solid #8e9bbc;
}

.panel .arrow {
  margin-left: auto;
}

/* Chrome ----------------------------------- */
.chrome {
  flex: 1;
  display: flex;
  flex-direction: column;
}

.tabstrip {
  position: relative;
  z-index: 0;
  flex: none;
  display: flex;
  height: 24px;
  padding-left: 4px;
  background: #e8cd67;
}

.tab {
  position: relative;
  display: flex;
  align-items: center;
  width: 93px;
  padding: 0 11px;
  font-size: 11px;
  color: #55523f;
}

/* slanted edges: the right one lies over the next tab */
.tab::before,
.tab::after {
  content: "";
  position: absolute;
  top: 0;
  bottom: 0;
  background: #d9d6c1;
  border-top: 1px solid #a89f72;
}

.tab::before {
  z-index: -2;
  left: 1px;
  right: 20px;
  border-left: 1px solid #a89f72;
  transform: skewX(-22deg);
}

.tab::after {
  z-index: -1;
  left: 20px;
  right: 0;
  border-right: 1px solid #a89f72;
  transform: skewX(22deg);
}

.tab.current {
  color: #222;
}

.tab.current::before,
.tab.current::after {
  z-index: -1;
  background: #fafafa;
}

.tab span {
  width: 40px;
  margin: 0 7px 0 4px;
  white-space: nowrap;
  -webkit-mask: linear-gradient(90deg, #000 70%, transparent 110%);
  mask: linear-gradient(90deg, #000 70%, transparent 110%);
}

.tab span.short {
  width: 22px;
  margin-right: 5px;
  -webkit-mask: none;
  mask: none;
}

.snd {
  width: 13px;
  height: 12px;
  margin-right: 7px;
}

.tab em {
  width: 16px;
  border-left: 3px solid #d8a767;
  font: 700 11px/14px "Open Sans", sans-serif;
  color: #3d3a2c;
}

.newtab {
  width: 26px;
  height: 14px;
  margin: 5px 0 0 5px;
  border: 1px solid #b9a968;
  border-radius: 3px;
  background: #dcd6b0;
  transform: skewX(22deg);
}

.tabstrip .winbuttons {
  margin-left: auto;
}

.addressbar {
  flex: none;
  display: flex;
  align-items: center;
  height: 36px;
  padding: 0 8px 0 9px;
  background: linear-gradient(#fafafa, #e4e4e4);
  border-bottom: 1px solid #a5a5a5;
  color: #4d4d4d;
}

.addressbar button {
  width: 16px;
  margin-right: 13px;
}

.addressbar .off {
  color: #c3c3c3;
}

.omnibox {
  flex: 1;
  display: flex;
  align-items: center;
  height: 28px;
  margin-right: 9px;
  padding: 0 4px;
  background: #fff;
  border: 1px solid #b0b0b0;
  border-radius: 2px;
}

.url {
  flex: 1;
  padding-left: 3px;
  font-size: 15px;
  line-height: 20px;
  color: #111;
}

.url span {
  color: #888;
}

.star {
  width: 18px;
  height: 18px;
  margin-left: 5px;
}

.addressbar .abp {
  width: 20px;
  height: 20px;
  margin-right: 16px;
  background: #c9301c;
  clip-path: polygon(30% 0, 70% 0, 100% 30%, 100% 70%, 70% 100%, 30% 100%, 0 70%, 0 30%);
  color: #fff;
  font-size: 8px;
  font-weight: 700;
  line-height: 20px;
}

.addressbar .hotdog {
  display: grid;
  gap: 2px;
  width: 13px;
  margin-right: 1px;
}

.hotdog i {
  height: 3px;
  background: #ef8e1a;
}

.page {
  flex: 1;
  overflow: hidden;
  padding-top: 8px;
  background: #fff;
}

.filter {
  display: grid;
  grid-template-columns: 74px 218px;
  gap: 1px 0;
  justify-content: center;
  justify-items: start;
}

.filter label {
  justify-self: end;
  padding-right: 1px;
  font: 700 15px/19px "Liberation Serif", serif;
  color: #000;
  white-space: nowrap;
}

.date {
  display: flex;
  align-items: center;
}

.date input {
  width: 120px;
  height: 20px;
  margin-right: 5px;
  padding: 2px 4px 0;
  border: 1px solid #ababab;
  font: 11px/16px "Liberation Sans", sans-serif;
  color: #333;
}

.cal {
  width: 14px;
  height: 14px;
}

.apply {
  grid-column: 2;
  width: 111px;
  height: 70px;
  border: 1px solid #999;
  background: linear-gradient(#f8f8f8, #dadada);
  font: 12px/16px "Liberation Sans", sans-serif;
  color: #000;
}

.chart {
  width: 740px;
  height: 480px;
  margin-top: 10px;
  font: 11px "Liberation Sans", sans-serif;
}

.chart .title {
  font-size: 14px;
}

.chart .axis {
  fill: #a8a8a8;
}

.minor {
  stroke: #d6d6d6;
  fill: none;
}

.major {
  stroke: #b3b3b3;
  fill: none;
}

.series rect {
  fill: url(#orange);
  stroke: #c57a24;
}
```
